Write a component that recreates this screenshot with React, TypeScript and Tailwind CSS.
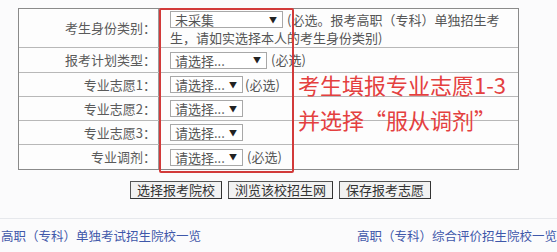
import React from "react";

const font = { fontFamily: '"Noto Sans CJK SC", "Noto Sans", sans-serif' };

function Sel({ text, w }: { text: string; w: string }) {
  return (
    <span
      className={`inline-flex items-center justify-between h-[17px] border border-[#a8a8a8] bg-white pl-[4px] pr-[5px] text-[13px] leading-none text-[#555] ${w}`}
    >
      <span>{text}</span>
      <span className="text-[8px] text-[#222]">▼</span>
    </span>
  );
}

function Row({
  label,
  h,
  children,
  last,
}: {
  label: string;
  h: string;
  children: React.ReactNode;
  last?: boolean;
}) {
  return (
    <div className={`flex ${h} ${last ? "" : "border-b border-[#b8b8b8]"}`}>
      <div className="w-[140px] shrink-0 border-r border-[#9a9a9a] flex items-center justify-end pr-[2px] text-[13px] text-[#5a5a5a]">
        {label}
      </div>
      <div className="flex-1 pl-[11px] flex items-center text-[13px] text-[#555]">{children}</div>
    </div>
  );
}

export default function App() {
  return (
    <div className="relative w-[557px] h-[252px] overflow-hidden bg-[#fbfbfc]" style={font}>
      <div className="pt-[8px] pl-[18px]">
        <div className="w-[501px] border border-[#8a8a8a] bg-[#fdfdfd]">
          <div className="flex h-[39px] border-b border-[#b8b8b8]">
            <div className="w-[140px] shrink-0 border-r border-[#9a9a9a] flex items-center justify-end pr-[2px] text-[13px] text-[#5a5a5a]">
              考生身份类别：
            </div>
            <div className="flex-1 pl-[11px] pt-[1px] flex flex-col text-[13px] text-[#555]">
              <div className="flex items-center gap-[4px] h-[19px] leading-[17px]">
                <Sel text="未采集" w="w-[113px]" />
                <span>(必选。报考高职（专科）单独招生考</span>
              </div>
              <div className="leading-[17px]">生，请如实选择本人的考生身份类别)</div>
            </div>
          </div>
          <Row label="报考计划类型：" h="h-[25px]">
            <Sel text="请选择..." w="w-[97px]" />
            <span className="ml-[4px]">(必选)</span>
          </Row>
          <Row label="专业志愿1：" h="h-[24px]">
            <Sel text="请选择..." w="w-[73px]" />
            <span className="ml-[2px]">(必选)</span>
          </Row>
          <Row label="专业志愿2：" h="h-[24px]">
            <Sel text="请选择..." w="w-[73px]" />
          </Row>
          <Row label="专业志愿3：" h="h-[24px]">
            <Sel text="请选择..." w="w-[73px]" />
          </Row>
          <Row label="专业调剂：" h="h-[24px]" last>
            <Sel text="请选择..." w="w-[73px]" />
            <span className="ml-[4px]">(必选)</span>
          </Row>
        </div>
      </div>

      <div className="mt-[11px] flex justify-center gap-[6px] pl-[4px]">
        {["选择报考院校", "浏览该校招生网", "保存报考志愿"].map((t) => (
          <span
            key={t}
            className="h-[18px] px-[6px] border border-[#555] border-r-[#333] border-b-[#333] bg-[#f2f2f2] text-[13px] leading-[16px] text-[#333]"
          >
            {t}
          </span>
        ))}
      </div>

      <div className="mt-[19px] border-t border-[#e6e8ec]" />
      <div className="mt-[8px] flex justify-between text-[12.5px] text-[#3f58aa]">
        <span className="pl-[1px]">高职（专科）单独考试招生院校一览</span>
        <span>高职（专科）综合评价招生院校一览</span>
      </div>

      {/* annotation overlay */}
      <div className="absolute left-[159px] top-[8px] w-[135px] h-[165px] border-[2.5px] border-[#d23a3a] rounded-[2px]" />
      <div className="absolute left-[298px] top-[70px] text-[22px] leading-[28px] text-[#e4403f]">
        考生填报专业志愿1-3
      </div>
      <div className="absolute left-[298px] top-[105px] text-[22px] leading-[28px] text-[#e4403f]">
        并选择“服从调剂”
      </div>
    </div>
  );
}
